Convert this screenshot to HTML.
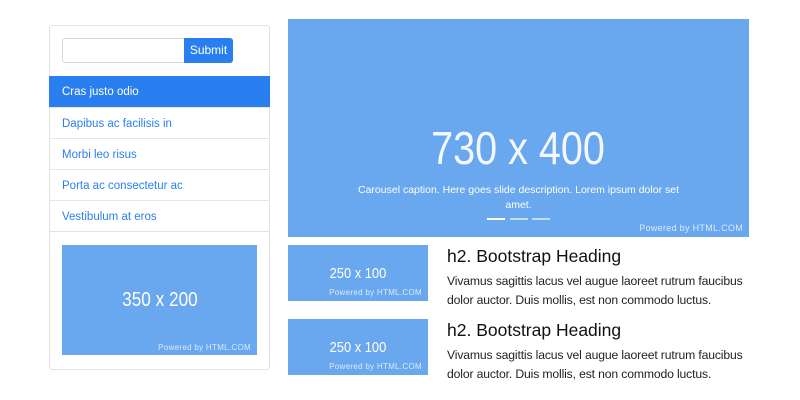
<!DOCTYPE html>
<html><head><style>
*{box-sizing:border-box;margin:0;padding:0}
body{width:800px;height:400px;background:#fff;font-family:"Liberation Sans",sans-serif;position:relative;overflow:hidden}
.a{position:absolute}
.card{left:49px;top:25px;width:221px;height:345px;border:1px solid #e2e2e2;border-radius:3px}
.inp{left:62px;top:38px;width:123px;height:25px;border:1px solid #d8d8d8;border-radius:3px 0 0 3px}
.btn{left:184px;top:38px;width:49px;height:25px;background:#2a7ff0;color:#fff;font-size:12px;line-height:25px;text-align:center;border-radius:0 3px 3px 0}
.li{left:49px;width:221px;height:31px;border-top:1px solid #e6e6e6;font-size:11.5px;line-height:32px;padding-left:13px;color:#2a7ff0}
.act{background:#2a7ff0;color:#fff;border-top:none}
.ph{background:#69a7ef;color:#fff;text-align:center}
.pw{font-size:8px;color:#dde9fb;letter-spacing:.3px}
.cd{display:inline-block;transform:scaleX(.86)}
h2{font-size:17.5px;font-weight:normal;color:#111}
p{font-size:12.2px;color:#222;line-height:19px;white-space:nowrap;letter-spacing:-.15px}
</style></head><body>
<div class="a card"></div>
<div class="a inp"></div>
<div class="a btn">Submit</div>
<div class="a li act" style="top:76px">Cras justo odio</div>
<div class="a li" style="top:107px">Dapibus ac facilisis in</div>
<div class="a li" style="top:138px">Morbi leo risus</div>
<div class="a li" style="top:169px">Porta ac consectetur ac</div>
<div class="a li" style="top:200px">Vestibulum at eros</div>
<div class="a" style="left:49px;top:231px;width:221px;border-top:1px solid #e2e2e2"></div>
<div class="a ph" style="left:62px;top:245px;width:195px;height:110px">
 <div class="a" style="left:0;right:0;top:44px;font-size:20px"><span class="cd">350 x 200</span></div>
 <div class="a pw" style="right:6px;top:98px">Powered by HTML.COM</div>
</div>
<div class="a ph" style="left:288px;top:19px;width:461px;height:218px">
 <div class="a" style="left:0;right:0;top:102px;font-size:46px;color:#f4f8fe"><span class="cd">730 x 400</span></div>
 <div class="a" style="left:60px;right:60px;top:164px;font-size:10.5px;line-height:15px">Carousel caption. Here goes slide description. Lorem ipsum dolor set amet.</div>
 <div class="a" style="left:199px;top:199px;width:18px;height:2px;background:#fff"></div>
 <div class="a" style="left:222px;top:199px;width:18px;height:2px;background:#c5dcf8"></div>
 <div class="a" style="left:244px;top:199px;width:18px;height:2px;background:#c5dcf8"></div>
 <div class="a pw" style="right:6px;top:204px;font-size:9px">Powered by HTML.COM</div>
</div>
<div class="a ph" style="left:288px;top:245px;width:140px;height:56px">
 <div class="a" style="left:0;right:0;top:20px;font-size:15px"><span class="cd">250 x 100</span></div>
 <div class="a pw" style="right:6px;top:43px">Powered by HTML.COM</div>
</div>
<div class="a ph" style="left:288px;top:319px;width:140px;height:56px">
 <div class="a" style="left:0;right:0;top:20px;font-size:15px"><span class="cd">250 x 100</span></div>
 <div class="a pw" style="right:6px;top:43px">Powered by HTML.COM</div>
</div>
<div class="a" style="left:447px;top:246px;width:320px"><h2>h2. Bootstrap Heading</h2><p style="margin-top:5px">Vivamus sagittis lacus vel augue laoreet rutrum faucibus<br>dolor auctor. Duis mollis, est non commodo luctus.</p></div>
<div class="a" style="left:447px;top:320px;width:320px"><h2>h2. Bootstrap Heading</h2><p style="margin-top:5px">Vivamus sagittis lacus vel augue laoreet rutrum faucibus<br>dolor auctor. Duis mollis, est non commodo luctus.</p></div>
</body></html>
